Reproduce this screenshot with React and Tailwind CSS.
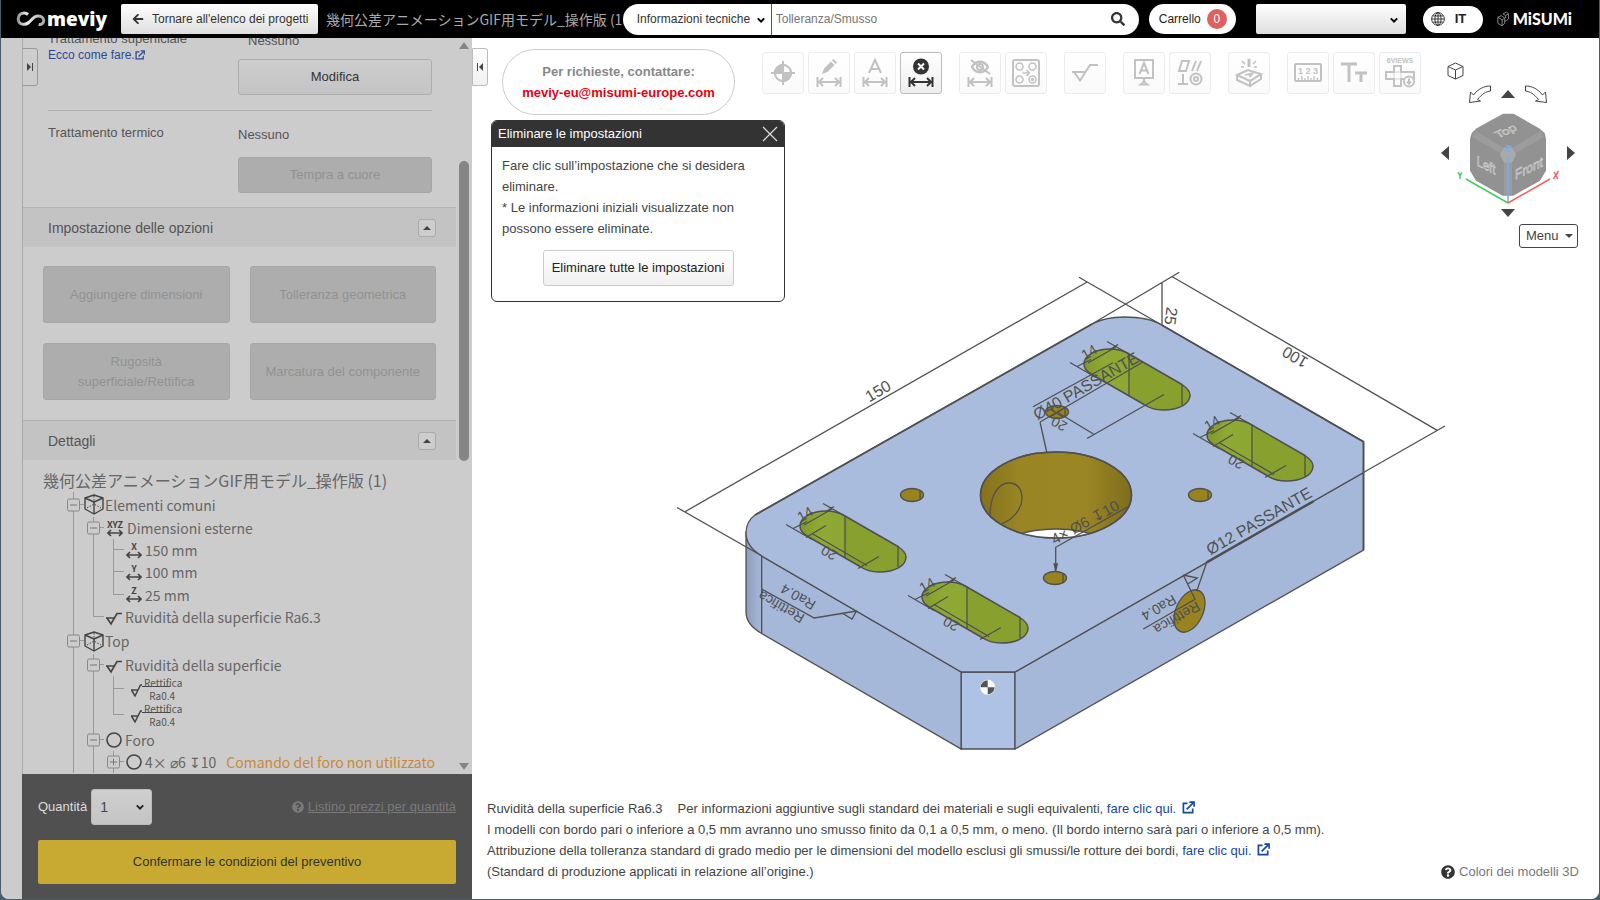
import { useState } from 'react'
import clsx from 'clsx'
import { FaSearch, FaArrowLeft, FaQuestionCircle } from 'react-icons/fa'

const Chevron = ({ className }) => (
  <svg viewBox="0 0 10 10" className={clsx('pointer-events-none h-2 w-2', className)} fill="none" stroke="currentColor" strokeWidth="2.4">
    <path d="M1 3l4 4 4-4" />
  </svg>
)

const ExternalIcon = ({ className }) => (
  <svg viewBox="0 0 14 14" className={clsx('inline-block', className)} fill="none" stroke="currentColor" strokeWidth="1.8">
    <path d="M6 2.500H1.500v10h10V8" />
    <path d="M5 9l7-7" />
    <path d="M8 1.200h5v5" />
  </svg>
)

const Header = () => (
  <header className="relative z-10 flex h-[38px] shrink-0 items-center bg-black">
    <a href="#home" aria-label="meviy" className="ml-[15px] flex w-[105px] shrink-0 items-center text-white">
      <svg viewBox="0 0 30 16" className="h-4 w-[30px]" fill="none">
        <defs>
          <linearGradient id="loop" x1="0" x2="1">
            <stop offset="0" stopColor="#999" />
            <stop offset="0.35" stopColor="#eee" />
            <stop offset="1" stopColor="#aaa" />
          </linearGradient>
        </defs>
        <path d="M12 3.500C9 1 2.500 1.500 2.200 8c0 6 7 6.500 10.500 3.500 3.500-3 5-6.500 9.500-6.500 3.500 0 5.500 2 5.500 4.500 0 3-2.500 4.500-5 4" stroke="url(#loop)" strokeWidth="3" />
      </svg>
      <span className="ml-px font-['Open_Sans'] text-[19px] leading-none font-extrabold">meviy</span>
    </a>
    <button className="flex h-[30px] w-[197px] shrink-0 items-center rounded-xs bg-linear-to-b from-white to-[#dedede] pl-[11px] text-xs whitespace-nowrap text-[#333]">
      <FaArrowLeft className="mr-2 h-3 w-3" />
      Tornare all'elenco dei progetti
    </button>
    <div className="ml-2 min-w-0 flex-1 overflow-hidden font-['Noto_Sans_CJK_JP',sans-serif] text-sm whitespace-nowrap text-[#aaa]">
      幾何公差アニメーションGIF用モデル_操作版 (1)
    </div>
    <form className="flex h-[31px] w-[516px] shrink-0 items-center overflow-hidden rounded-full bg-white text-[13px]">
      <div className="relative h-full w-[149px] border-r border-[#555]">
        <select aria-label="Categoria" className="h-full w-full appearance-none pl-3.5 text-xs text-[#333] outline-none">
          <option>Informazioni tecniche</option>
        </select>
        <Chevron className="absolute top-3 right-1.5" />
      </div>
      <input aria-label="Cerca" placeholder="Tolleranza/Smusso" className="h-full min-w-0 flex-1 px-1 text-xs outline-none placeholder:text-[#757575]" />
      <button type="button" aria-label="Cerca" className="pr-3.5 text-[#333]">
        <FaSearch className="h-3.5 w-3.5" />
      </button>
    </form>
    <a href="#cart" className="ml-2.5 flex h-[30px] w-[87px] shrink-0 items-center gap-1.5 rounded-full bg-white pl-2.5 text-xs text-[#222]">
      Carrello
      <span className="flex h-5 w-5 items-center justify-center rounded-full bg-[#e05f5f] text-white">0</span>
    </a>
    <div className="relative ml-5 h-[30px] w-[150px] shrink-0">
      <select aria-label="Account" className="h-full w-full appearance-none rounded-xs bg-linear-to-b from-white to-[#dedede]">
        <option></option>
      </select>
      <Chevron className="absolute top-3 right-2" />
    </div>
    <button className="ml-[17px] flex h-[27px] w-[60px] shrink-0 items-center gap-2.5 rounded-full bg-white pl-2 text-[13px] font-bold text-[#222]">
      <svg viewBox="0 0 16 16" className="h-3.5 w-3.5" fill="none" stroke="currentColor">
        <circle cx="8" cy="8" r="7.300" />
        <ellipse cx="8" cy="8" rx="3.500" ry="7.300" />
        <path d="M8 1v14M1 8h14M2 4.500h12M2 11.500h12" />
      </svg>
      IT
    </button>
    <div className="mr-[27px] ml-3.5 flex shrink-0 items-center gap-1 text-white">
      <svg viewBox="0 0 14 18" className="h-4 w-3" fill="none" stroke="#999">
        <path d="M1 7l4-2 4 3v6l-3 3-5-3zM1 7l5 3 3-2M6 10v7M7 3l4-2 2.500 2v6L9 12M7 3l3 2 3.500-2M10 5v3" />
      </svg>
      <span className="font-['Lato'] text-[16px] leading-none font-black">MiSUMi</span>
    </div>
  </header>
)

const grayButton = 'rounded-[3px] border border-[#a6a6a6] bg-[#adadad] text-[13px] leading-5 text-[#929292]'

const SectionTitle = ({ children }) => (
  <div className="flex h-10 items-center justify-between border-t border-[#b2b2b2] bg-[#c3c3c3] pr-5 pl-[25px] text-sm text-[#555]">
    <h2>{children}</h2>
    <button aria-label="Comprimi" className="flex h-[18px] w-[18px] items-center justify-center rounded-[3px] border border-[#aaa] bg-[#cdcdcd]">
      <span className="border-x-4 border-b-4 border-x-transparent border-b-[#444]" />
    </button>
  </div>
)

const BoxIcon = () => (
  <svg viewBox="0 0 20 21" className="h-[21px] w-5" fill="none" stroke="#444" strokeWidth="1.4" strokeLinejoin="round">
    <path d="M10 1L19 4v11l-9 5-9-5V4z" />
    <path d="M1 4l9 4 9-4M10 8v12" />
    <path d="M10 2v8M3 14l7-4 7 4" strokeWidth="1" strokeDasharray="1.500 1.500" />
  </svg>
)

const AxisIcon = ({ label, wide }) => (
  <span className={clsx('flex flex-col items-center text-[9px] leading-[9px] font-bold text-[#444]', wide ? 'w-[18px]' : 'w-4')}>
    {label}
    <svg viewBox="0 0 16 8" className="h-2 w-4" fill="none" stroke="currentColor" strokeWidth="1.600">
      <path d="M1 4h14M4 1L1 4l3 3M12 1l3 3-3 3" />
    </svg>
  </span>
)

const RoughIcon = () => (
  <svg viewBox="0 0 16 14" className="mt-1 h-3.5 w-4" fill="none" stroke="#444" strokeWidth="1.7">
    <path d="M0 6h8.500M1 6l4 6 6-10.500h5" />
  </svg>
)

const CircleIcon = () => (
  <svg viewBox="0 0 16 16" className="h-4 w-4" fill="none" stroke="#444" strokeWidth="1.6">
    <circle cx="8" cy="8" r="7" />
  </svg>
)

const RettificaIcon = () => (
  <span className="ml-1 flex items-center text-[10px] leading-[13px] text-[#555]">
    <svg viewBox="0 0 12 14" className="mt-1 h-3.5 w-3" fill="none" stroke="#444" strokeWidth="1.5">
      <path d="M1 6h7M1.500 6L5 12 10.500 1H12" />
    </svg>
    <span className="flex flex-col items-center">
      <span className="bg-[linear-gradient(#444,#444)] bg-[length:28px_1px] bg-[position:0_10px] bg-no-repeat pl-0.5">Rettifica</span>
      <span>Ra0.4</span>
    </span>
  </span>
)

const treeRows = [
  { guides: ['minus'], icon: <BoxIcon />, text: 'Elementi comuni', height: 'h-[25px]' },
  { guides: ['line', 'minus'], icon: <AxisIcon label="XYZ" wide />, text: 'Dimensioni esterne', height: 'h-[22px]' },
  { guides: ['line', 'line', 'branch'], icon: <AxisIcon label="X" />, text: '150 mm', height: 'h-[22px]' },
  { guides: ['line', 'line', 'branch'], icon: <AxisIcon label="Y" />, text: '100 mm', height: 'h-[22px]' },
  { guides: ['line', 'line', 'end'], icon: <AxisIcon label="Z" />, text: '25 mm', height: 'h-[23px]' },
  { guides: ['line', 'end'], icon: <RoughIcon />, text: 'Ruvidità della superficie Ra6.3', height: 'h-[22px]' },
  { guides: ['minus'], icon: <BoxIcon />, text: 'Top', height: 'h-[26px]' },
  { guides: ['line', 'minus'], icon: <RoughIcon />, text: 'Ruvidità della superficie', height: 'h-[22px]' },
  { guides: ['line', 'line', 'branch'], icon: <RettificaIcon />, height: 'h-[26px]' },
  { guides: ['line', 'line', 'end'], icon: <RettificaIcon />, height: 'h-[26px]' },
  { guides: ['line', 'minus'], icon: <CircleIcon />, text: 'Foro', height: 'h-[23px]' },
  { guides: ['line', 'line', 'plus'], icon: <CircleIcon />, text: '4× ⌀6 ↧10', note: 'Comando del foro non utilizzato', height: 'h-[22px]' },
]

const Guide = ({ type }) => (
  <span className="relative flex w-5 shrink-0 self-stretch">
    <span className="flex w-1/2 flex-col">
      <span className="h-1/2 border-r border-[#999]" />
      <span className={clsx('h-1/2', type !== 'end' && 'border-r border-[#999]')} />
    </span>
    <span className={clsx('h-1/2 w-1/2', type !== 'line' && 'border-b border-[#999]')} />
    {(type === 'minus' || type === 'plus') && (
      <button
        aria-label={type === 'minus' ? 'Comprimi' : 'Espandi'}
        className="absolute top-1/2 left-[3px] flex h-[13px] w-[13px] -translate-y-1/2 items-center justify-center rounded-xs border border-[#888] bg-[#ccc]"
      >
        <svg viewBox="0 0 7 7" className="h-[7px] w-[7px]" stroke="#777">
          <path d={type === 'minus' ? 'M0 3.500h7' : 'M0 3.500h7M3.500 0v7'} />
        </svg>
      </button>
    )}
  </span>
)

const SidePanel = () => {
  const [quantity, setQuantity] = useState('1')

  return (
    <aside className="flex w-[450px] shrink-0 flex-col border-l border-[#aaa] bg-[#ccc] text-[13px] text-[#555]">
      <div className="relative flex min-h-0 flex-1 overflow-hidden">
        <button aria-label="Apri pannello" className="absolute top-2.5 -left-px flex h-[38px] w-4 items-center justify-center rounded-r-[3px] border border-[#999] bg-[#cdcdcd]">
          <span className="border-y-4 border-l-4 border-y-transparent border-l-[#444]" />
          <span className="ml-px h-2 w-px bg-[#444]" />
        </button>
        <div className="-mt-[7px] min-w-0 flex-1">
          <div className="mr-6 ml-[25px] flex h-20 border-b border-[#b0b0b0]">
            <div className="w-[190px] leading-4">
              <p>Trattamento superficiale</p>
              <a href="#guide" className="flex items-center text-xs text-[#2c4a94]">
                Ecco come fare.
                <ExternalIcon className="h-2.5 w-2.5" />
              </a>
            </div>
            <div className="flex-1">
              <p className="pl-2.5 leading-5">Nessuno</p>
              <button className="mt-2 h-9 w-full rounded-[3px] border border-[#adadad] bg-linear-to-b from-[#cdcdcd] to-[#c4c4c4] text-[#333]">Modifica</button>
            </div>
          </div>
          <div className="mr-6 ml-[25px] flex h-24">
            <p className="w-[190px] pt-3.5 leading-4">Trattamento termico</p>
            <div className="flex-1 pt-3.5">
              <p className="leading-5">Nessuno</p>
              <button disabled className={clsx(grayButton, 'mt-3 h-9 w-full')}>Tempra a cuore</button>
            </div>
          </div>
          <SectionTitle>Impostazione delle opzioni</SectionTitle>
          <div className="grid grid-cols-2 gap-5 py-[19px] pr-5 pb-5 pl-5">
            <button disabled className={clsx(grayButton, 'h-[57px]')}>Aggiungere dimensioni</button>
            <button disabled className={clsx(grayButton, 'h-[57px]')}>Tolleranza geometrica</button>
            <button disabled className={clsx(grayButton, 'h-[57px] px-6')}>Rugosità superficiale/Rettifica</button>
            <button disabled className={clsx(grayButton, 'h-[57px]')}>Marcatura del componente</button>
          </div>
          <SectionTitle>Dettagli</SectionTitle>
          <div className="pt-2 pl-5 font-['Noto_Sans_CJK_JP',sans-serif] text-[#666]">
            <h3 className="text-base leading-6 whitespace-nowrap">幾何公差アニメーションGIF用モデル_操作版 (1)</h3>
            <ul className="pl-[21px] text-sm">
              {treeRows.map((row, index) => (
                <li key={index} className={clsx('flex items-center whitespace-nowrap', row.height)}>
                  {row.guides.map((type, i) => (
                    <Guide key={i} type={type} />
                  ))}
                  <span className={clsx('flex', row.guides.length > 1 && 'ml-0.5')}>{row.icon}</span>
                  {row.text && <span className={clsx('leading-5', row.guides.length > 1 ? 'ml-[3px]' : 'ml-px')}>{row.text}</span>}
                  {row.note && <span className="ml-2.5 leading-5 text-[#c98a3c]">{row.note}</span>}
                </li>
              ))}
            </ul>
          </div>
        </div>
        <div className="flex w-4 shrink-0 flex-col items-center py-1">
          <span className="border-x-[5px] border-b-[7px] border-x-transparent border-b-[#858585]" />
          <span className="mt-[112px] h-[300px] w-2.5 rounded-full bg-[#858585]" />
          <span className="mt-auto border-x-[5px] border-t-[7px] border-x-transparent border-t-[#858585]" />
        </div>
      </div>
      <div className="-ml-px bg-[#505050] px-4 pt-[15px] pb-[15px]">
        <div className="flex items-center">
          <label htmlFor="quantity" className="mr-1 text-[#ddd]">Quantità</label>
          <div className="relative">
            <select
              id="quantity"
              value={quantity}
              onChange={(event) => setQuantity(event.target.value)}
              className="h-9 w-[61px] appearance-none rounded-[3px] border border-[#bbb] bg-linear-to-b from-[#cfcfcf] to-[#c4c4c4] pl-2 text-sm text-[#444]"
            >
              <option>1</option>
              <option>2</option>
              <option>3</option>
            </select>
            <Chevron className="absolute top-3.5 right-2 text-[#222]" />
          </div>
          <a href="#prices" className="ml-auto flex items-center gap-1 text-[#7a7a7a]">
            <FaQuestionCircle className="h-3 w-3" />
            <span className="underline">Listino prezzi per quantità</span>
          </a>
        </div>
        <button className="mt-[15px] h-11 w-full rounded-xs bg-[#c8aa32] text-[#333]">Confermare le condizioni del preventivo</button>
      </div>
    </aside>
  )
}

// Shared lower half of the dimension icons
const dimension = 'M1.500 18v10M24.500 18v10M3 23h20M7 19l-4 4 4 4M19 19l4 4-4 4'

const toolGroups = [
  [
    {
      name: 'Origine',
      art: (
        <>
          <circle cx="13" cy="14" r="8" />
          <path d="M13 2v24M1 14h24" />
          <path d="M13 14V6a8 8 0 018 8zM13 14v8a8 8 0 01-8-8z" fill="white" stroke="none" />
          <path d="M13 14V6a8 8 0 00-8 8zM13 14v8a8 8 0 008-8z" fill="currentColor" />
          <circle cx="13" cy="14" r="8" />
        </>
      ),
    },
    {
      name: 'Modifica quota',
      art: (
        <>
          <path d={dimension} />
          <path d="M6 15l2-5.500 7-7 3.500 3.500-7 7zM16 1.500L17.500 0 21 3.500 19.500 5z" fill="currentColor" stroke="none" />
        </>
      ),
    },
    { name: 'Testo quota', art: <path d={`${dimension}M7 14L13 1l6 13M9 10h8`} /> },
    {
      name: 'Elimina quota',
      active: true,
      art: (
        <>
          <path d={dimension} />
          <circle cx="13" cy="7.500" r="8" fill="currentColor" stroke="none" />
          <path d="M10 4.500l6 6M16 4.500l-6 6" stroke="white" />
        </>
      ),
    },
  ],
  [
    {
      name: 'Nascondi quota',
      art: (
        <>
          <path d={dimension} />
          <path d="M5 8c4-7 12-7 16 0-4 7-12 7-16 0z" strokeWidth="2.500" />
          <circle cx="13" cy="8" r="3" />
          <path d="M4 1l19 14" />
        </>
      ),
    },
    {
      name: 'Gruppo fori',
      art: (
        <>
          <rect x="0" y="1" width="26" height="26" rx="2" />
          <g strokeWidth="1.500">
            <circle cx="6.500" cy="7.500" r="3.500" />
            <circle cx="19.500" cy="7.500" r="3.500" />
            <circle cx="6.500" cy="20.500" r="3.500" />
            <circle cx="19.500" cy="20.500" r="3.500" />
            <circle cx="19.500" cy="20.500" r="1" />
            <path d="M9.500 14h7M13.500 11l3 3-3 3" />
          </g>
        </>
      ),
    },
  ],
  [{ name: 'Rugosità', art: <path d="M0 13h13M2 13l6 8.500L18 6h8" /> }],
  [
    { name: 'Riferimento', art: <path d="M4 1h18v18H4zM8.500 15L13 4l4.500 11M10 11.500h6M13 19v4M9.500 25.500l3.500-3 3.500 3z" /> },
    {
      name: 'Tolleranza geometrica',
      art: (
        <>
          <path d="M2 12L5 2h7L9 12zM15 12l4-10M20 12l4-10M6 15v10M1 25h10" />
          <circle cx="19" cy="20" r="5.500" />
          <circle cx="19" cy="20" r="2" />
        </>
      ),
    },
  ],
  [
    {
      name: 'Marcatura',
      art: (
        <>
          <path d="M1 16l11-5 13 4-11 7zM1 16v5l13 6v-5M25 15v5l-11 7M1 16l13 6" />
          <path d="M13 0v8" strokeWidth="3" />
          <path d="M6 2l3 3M20 2l-3 3M5 8h3M18 8h3" strokeWidth="1.500" />
          <path d="M9 16l8-2-3 4M13 15l1 3" strokeWidth="1.500" />
        </>
      ),
    },
  ],
  [
    {
      name: 'Misura',
      art: (
        <>
          <rect x="0" y="5" width="26" height="17" rx="1" />
          <path d="M3.500 21v-2M7 21v-4M10 21v-2M13 21v-4M16 21v-2M19 21v-4M22.500 21v-2" strokeWidth="1.300" />
          <text x="13" y="15" textAnchor="middle" fontSize="9" fontWeight="bold" fill="currentColor" stroke="none">1 2 3</text>
        </>
      ),
    },
    { name: 'Dimensione testo', art: <path d="M0 5h16M8 5v18M14 14h12M20 14v9" strokeWidth="3" /> },
    {
      name: 'Sei viste',
      art: (
        <>
          <text x="13" y="4" textAnchor="middle" fontSize="7" fontWeight="bold" fill="currentColor" stroke="none">6VIEWS</text>
          <path d="M7 7h7v6h13v7H14v7H7v-7h-8v-7h8z" />
          <path d="M7 13h7v7H7z" strokeWidth="0.700" />
          <circle cx="22" cy="22.500" r="5" fill="white" />
          <path d="M22 19.500v5M20 22.500l2 2.500 2-2.500" />
        </>
      ),
    },
  ],
]

const Toolbar = () => (
  <div className="mt-3.5 ml-[27px] flex h-[42px] gap-[17px]">
    {toolGroups.map((group, index) => (
      <div key={index} className="flex gap-1">
        {group.map((tool) => (
          <button
            key={tool.name}
            aria-label={tool.name}
            className={clsx(
              'flex h-[42px] w-[42px] items-center justify-center rounded-[3px] border bg-linear-to-b',
              tool.active ? 'border-[#bbb] from-white to-[#eee] text-[#333]' : 'border-[#ececec] from-white to-[#fafafa] text-[#c2c2c2]'
            )}
          >
            <svg viewBox="0 0 26 28" className="h-7 w-[26px] overflow-visible" fill="none" stroke="currentColor" strokeWidth="2">
              {tool.art}
            </svg>
          </button>
        ))}
      </div>
    ))}
  </div>
)

const DeleteDialog = () => (
  <section className="mt-[5px] -ml-[11px] w-[294px] overflow-hidden rounded-md border border-[#333] bg-white text-[13px]">
    <div className="flex h-[26px] items-center justify-between bg-[#333] px-1.5 text-white">
      <h2>Eliminare le impostazioni</h2>
      <button aria-label="Chiudi">
        <svg viewBox="0 0 16 16" className="h-4 w-4" stroke="#ddd" strokeWidth="1.2">
          <path d="M1 1l14 14M15 1L1 15" />
        </svg>
      </button>
    </div>
    <div className="px-2.5 pt-2 pb-[15px] text-[#444]">
      <p className="leading-[21px]">
        Fare clic sull’impostazione che si desidera eliminare.
        <br />* Le informazioni iniziali visualizzate non possono essere eliminate.
      </p>
      <button className="mx-auto mt-[11px] block h-9 w-[191px] rounded-[3px] border border-[#ccc] bg-linear-to-b from-white to-[#f0f0f0] text-[#222]">
        Eliminare tutte le impostazioni
      </button>
    </div>
  </section>
)

const ViewCube = () => (
  <div className="mr-[21px] ml-auto flex w-[140px] shrink-0 flex-col items-center pt-6 text-[#444]">
    <button aria-label="Vista isometrica" className="mr-auto ml-[9px]">
      <svg viewBox="0 0 17 18" className="h-[18px] w-[17px]" fill="none" stroke="currentColor" strokeLinejoin="round">
        <path d="M8.500 1L16 4.500v9L8.500 17 1 13.500v-9zM1 4.500L8.500 8 16 4.500M8.500 8v9" />
      </svg>
    </button>
    <div className="mt-[5px] flex items-center gap-2.5">
      <button aria-label="Ruota a sinistra">
        <svg viewBox="0 0 22 18" className="h-[18px] w-[22px]" fill="none" stroke="currentColor">
          <path d="M21.500 1v5C17 6.500 13 9 8.500 14.500l3 1.500L.5 17.500 1.500 7l3 3C9 4 15 1 21.500 1z" />
        </svg>
      </button>
      <button aria-label="Ruota in alto" className="border-x-[7px] border-b-8 border-x-transparent border-b-[#444]" />
      <button aria-label="Ruota a destra">
        <svg viewBox="0 0 22 18" className="h-[18px] w-[22px]" fill="none" stroke="currentColor">
          <path d="M.5 1v5C5 6.500 9 9 13.500 14.500l-3 1.500 11 1.500L20.500 7l-3 3C13 4 7 1 .5 1z" />
        </svg>
      </button>
    </div>
    <div className="mt-0.5 flex items-center">
      <button aria-label="Vista sinistra" className="border-y-[7px] border-r-8 border-y-transparent border-r-[#444]" />
      <svg viewBox="1449 106 118 96" className="h-24 w-[118px] overflow-visible">
        <path
          d="M1503 114.700h10.700L1539 129.300l5.700 4.700 1.300 6v31.700l-6 10-26.700 15h-10.600l-26.700-15-6-10V140l1.700-6 5-4.700z"
          fill="#929292"
        />
        <path d="M1476 132l28 17-2 6-30-17zM1540 132l-28 17 2 6 30-17zM1504 163h8v33h-8z" fill="#9c9c9c" />
        <path d="M1504 148.500h8l4 7.500-4 7.500h-8l-4-7.500z" fill="#aaa" />
        <g fontSize="14" fill="#929292" stroke="#d0d0d0" strokeWidth="0.700" textAnchor="middle">
          <text transform="matrix(.87 -.4 .5 .6 1508 135)">Top</text>
          <text transform="matrix(.8 .4 0 1 1486 171)">Left</text>
          <text transform="matrix(.85 -.42 0 1 1529 174)">Front</text>
        </g>
        <g fill="none" strokeWidth="1.500">
          <path d="M1508 157v47M1505.500 146.500l5 1-5 4 5 1" stroke="#6fb1f5" />
          <path d="M1466 180l42 24M1458 173l2 3.500 2-3M1460 176.500v3.500" stroke="#3fcf5f" />
          <path d="M1508 204l42-24M1554 173l4 7M1558.500 172l-5 8" stroke="#f76060" />
        </g>
      </svg>
      <button aria-label="Vista destra" className="border-y-[7px] border-l-8 border-y-transparent border-l-[#444]" />
    </div>
    <button aria-label="Ruota in basso" className="mt-2 border-x-[7px] border-t-8 border-x-transparent border-t-[#444]" />
    <button className="mt-[7px] ml-auto flex h-6 w-[59px] items-center justify-between rounded-[3px] border border-[#444] bg-white pr-1 pl-1.5 text-[13px] text-[#444]">
      Menu
      <span className="border-x-4 border-t-4 border-x-transparent border-t-[#444]" />
    </button>
  </div>
)

const slotOutline =
  'M845 516L898 546.500C903 550 906 553 906 557C906 566 895 572 879 572C871 572 865 570 860 566.500L807 536C803 533.500 800 530 800 526C800 517 813 511 826 511C834 511 840 513 845 516Z'

const slots = [
  { x: 0, y: 0, depth: true },
  { x: 122, y: 71, depth: true },
  { x: 284, y: -162, depth: false },
  { x: 407, y: -91, depth: true },
]

const smallHoles = [
  [912, 495],
  [1200, 495],
  [1055, 578],
  [1057, 412],
]

const Note = ({ x, y, angle, size = 14, children }) => (
  <text transform={`translate(${x} ${y}) rotate(${angle})`} fontSize={size} textAnchor="middle" dominantBaseline="central" fill="#505050" stroke="none">
    {children}
  </text>
)

const Model = () => (
  <svg
    viewBox="472 38 1127 861"
    className="absolute inset-0 h-full w-full font-['Liberation_Sans',sans-serif]"
    fill="none"
    stroke="#505050"
    strokeWidth="1.300"
    role="img"
    aria-label="Modello 3D"
  >
    <defs>
      <linearGradient id="round" x1="0" x2="1">
        <stop offset="0" stopColor="#8e9dbc" />
        <stop offset="1" stopColor="#a6b8da" />
      </linearGradient>
      <linearGradient id="slot" x1="0" x2="1">
        <stop offset="0" stopColor="#809a2b" />
        <stop offset="0.2" stopColor="#8faa34" />
        <stop offset="0.42" stopColor="#8ca732" />
        <stop offset="0.44" stopColor="#87a02e" />
        <stop offset="1" stopColor="#87a02e" />
      </linearGradient>
      <linearGradient id="bore" x1="0" x2="1">
        <stop offset="0" stopColor="#84711c" />
        <stop offset="0.25" stopColor="#998524" />
        <stop offset="0.7" stopColor="#9b8625" />
        <stop offset="1" stopColor="#7f6d1c" />
      </linearGradient>
      <clipPath id="boreClip">
        <ellipse cx="1056" cy="495" rx="75.500" ry="43" />
      </clipPath>
    </defs>

    {/* body */}
    <path d="M746 533v79c0 10 6 16 15.700 21.500V556z" fill="url(#round)" />
    <path d="M761.700 556v77.500L961.300 749v-77z" fill="#a6b8da" />
    <path d="M961.300 672v77H1015v-77z" fill="#aec2e5" />
    <path d="M1015 672v77l348.500-199v-77.500z" fill="#a6b8da" />
    <path
      d="M961.300 672H1015L1363.500 472.500V441.700L1161.700 325C1152 319 1138 317 1124 317C1112 317 1102 319 1093 323.500L755 515C748 520 746 527 746 533C746 543 752 550 761.700 556Z"
      fill="#aabcdd"
    />
    <path d="M1093 323.500L755 515M1161.700 325l201.800 116.700V550" strokeWidth="1.800" />

    {/* slots */}
    {slots.map((slot) => (
      <g key={slot.x} transform={`translate(${slot.x} ${slot.y})`}>
        <path d={slotOutline} fill="url(#slot)" strokeWidth="1.500" />
        <path d="M845 516v42M898 546.500v20.500M823 503.500l22 12.500M786 524.500l26 15M793 528.500l14-7M826 511.500l8-5M804 525l28-16" />
        {slot.depth && <path d="M806 537.500l20-12M858 568.500l21-12M812 533.500l55 32" />}
        <Note x={805} y={514} angle={-30}>14</Note>
        {slot.depth && <Note x={829} y={553} angle={210}>20</Note>}
      </g>
    ))}

    {/* bore */}
    <ellipse cx="1056" cy="495" rx="75.500" ry="43" fill="url(#bore)" />
    <ellipse cx="1056" cy="572" rx="76" ry="43" fill="white" clipPath="url(#boreClip)" />
    <ellipse cx="1056" cy="495" rx="75.500" ry="43" strokeWidth="1.600" />
    <path d="M990 515C990 498 997 483 1009 483C1018 483 1022 490 1022 498C1022 508 1014 519 1001.500 524" />
    {smallHoles.map(([x, y]) => (
      <g key={x}>
        <ellipse cx={x} cy={y} rx="11.500" ry="6.500" fill="#98831f" />
        <path d={`M${x + 8} ${y - 5}v10`} />
      </g>
    ))}
    <path d="M1050 409l13 8M1050 417l13-8" />
    <ellipse cx="1189.500" cy="611" rx="13.500" ry="22.500" transform="rotate(25 1189.500 611)" fill="#98831f" />

    {/* outer dimensions */}
    <path d="M677 507.500l85 48.500M685 511.700L1086.700 282.300M1079 277.300L1161.700 325" />
    <path d="M1172.300 276.700l265 153.700M1179.300 272.300l-86 51M1445 426l-82 46.700M1162 282.300V325" />
    <Note x={878} y={391} angle={-30} size={16}>150</Note>
    <Note x={1295} y={357} angle={210} size={16}>100</Note>
    <Note x={1171} y={316} angle={98} size={16}>25</Note>

    {/* hole notes */}
    <path d="M1033 406.700l80-44M1040 422l103-60M1040 422l6.700 30M1057 412l36.500 22M1087 438.500l77-44" />
    <Note x={1086} y={386} angle={-30} size={16}>Ø40 PASSANTE</Note>
    <Note x={1059} y={424} angle={210}>20</Note>
    <path d="M1128 506.700l-72.300 40.600v24.500M1054 563l1.700 8 1.700-8" />
    <Note x={1085} y={522} angle={-29} size={15}>4× Ø6 ↧10</Note>
    <path d="M1206.700 562.300l106.600-61" strokeWidth="2.500" />
    <path d="M1206.700 562.300l-10 29" />
    <Note x={1259} y={521} angle={-30} size={16}>Ø12 PASSANTE</Note>

    {/* surface finish notes */}
    <path d="M761.700 589l52.600 29 42.400-7M842 613l10 6 4.500-8" />
    <Note x={798} y={597} angle={210}>Ra0.4</Note>
    <Note x={781} y={607} angle={210}>Rettifica</Note>
    <path d="M1143.300 629l51.700-29.700-11.700-24.300M1183.300 575l14 3-9.500 6" />
    <Note x={1159} y={608} angle={150}>Ra0.4</Note>
    <Note x={1177} y={618} angle={150}>Rettifica</Note>

    {/* origin marker */}
    <g stroke="none">
      <circle cx="987.700" cy="687.300" r="7.500" fill="white" />
      <path d="M987.700 687.300v-7a7 7 0 00-7 7zM987.700 687.300v7a7 7 0 007-7z" fill="#555" />
    </g>
  </svg>
)

const Viewer = () => (
  <main className="relative min-w-0 flex-1 flex flex-col bg-white">
    <Model />
    <div className="relative flex items-start">
      <button aria-label="Chiudi pannello" className="mt-2.5 flex h-[38px] w-4 shrink-0 items-center justify-center rounded-r-[3px] border border-[#bbb] bg-linear-to-b from-white to-[#f0f0f0]">
        <span className="mr-px h-2 w-px bg-[#444]" />
        <span className="border-y-4 border-r-4 border-y-transparent border-r-[#444]" />
      </button>
      <div className="ml-3.5 w-[233px] shrink-0 pt-[11px]">
        <div className="flex h-[66px] flex-col items-center justify-center rounded-full border border-[#ccc] bg-white text-[13px] leading-[21px] font-bold text-[#888]">
          <span>Per richieste, contattare:</span>
          <a href="mailto:meviy-eu@misumi-europe.com" className="text-[#e60012]">meviy-eu@misumi-europe.com</a>
        </div>
        <DeleteDialog />
      </div>
      <Toolbar />
      <ViewCube />
    </div>
    <footer className="relative mt-auto flex items-end justify-between pr-5 pb-[17px] pl-[15px] text-[13px] text-[#444]">
      <div className="leading-[21px]">
        <p>
          <span className="mr-[15px]">Ruvidità della superficie Ra6.3</span>
          Per informazioni aggiuntive sugli standard dei materiali e sugli equivalenti,{' '}
          <a href="#materials" className="text-[#1546a8]">fare clic qui. <ExternalIcon className="mb-1 ml-0.5 h-[13px] w-[13px]" /></a>
        </p>
        <p>I modelli con bordo pari o inferiore a 0,5 mm avranno uno smusso finito da 0,1 a 0,5 mm, o meno. (Il bordo interno sarà pari o inferiore a 0,5 mm).</p>
        <p>
          Attribuzione della tolleranza standard di grado medio per le dimensioni del modello esclusi gli smussi/le rotture dei bordi,{' '}
          <a href="#tolerance" className="text-[#1546a8]">fare clic qui. <ExternalIcon className="mb-1 ml-0.5 h-[13px] w-[13px]" /></a>
        </p>
        <p>(Standard di produzione applicati in relazione all’origine.)</p>
      </div>
      <button className="flex items-center gap-1 text-[13px] leading-[21px] text-[#777]">
        <FaQuestionCircle className="h-3.5 w-3.5 text-[#333]" />
        Colori dei modelli 3D
      </button>
    </footer>
  </main>
)

const App = () => (
  <div className="flex h-screen flex-col overflow-hidden bg-[#46606b] px-px pb-px font-['Liberation_Sans',Arial,sans-serif]">
    <Header />
    <div className="flex min-h-0 flex-1 overflow-hidden rounded-b-lg bg-[#ccc]">
      <div className="w-[21px] shrink-0 bg-[#ccc]" />
      <SidePanel />
      <Viewer />
    </div>
  </div>
)

export default App
